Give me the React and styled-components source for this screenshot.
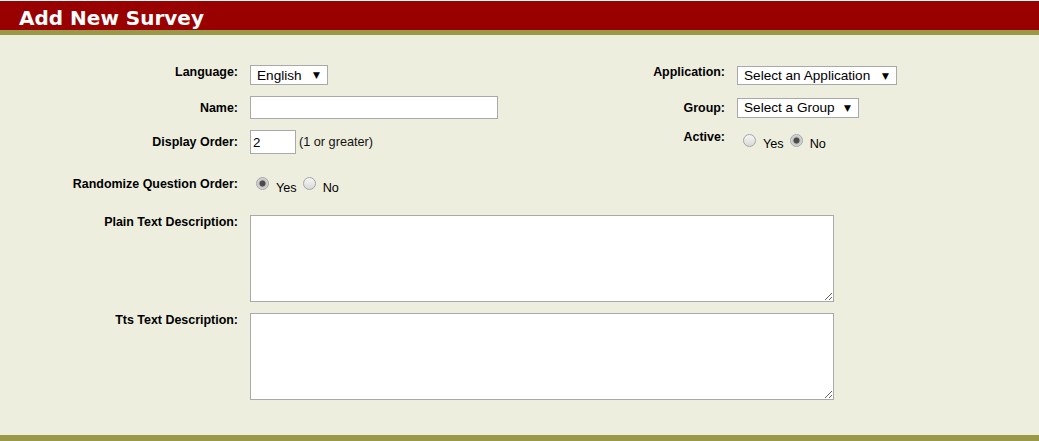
import styled, { createGlobalStyle } from "styled-components";

const olive = "#999947";
const beige = "#eeeedf";
const border = "#a9a9a9";

const GlobalStyle = createGlobalStyle`
  html, body {
    margin: 0;
    padding: 0;
    background: #fff;
  }
  body {
    font-family: "Liberation Sans", Arial, sans-serif;
  }
  * {
    box-sizing: border-box;
  }
`;

function Select({ value, width, height = 20, align = "end" }) {
  return (
    <SelectWrap $width={width} $height={height} $align={align}>
      <NativeSelect defaultValue={value}>
        <option>{value}</option>
      </NativeSelect>
      <Arrow>▼</Arrow>
    </SelectWrap>
  );
}

function RadioGroup({ name, options, checked, drop = 4, spaced, align }) {
  return (
    <Radios $spaced={spaced} $align={align}>
      {options.map((opt) => (
        <Option key={opt}>
          <Radio type="radio" name={name} defaultChecked={opt === checked} />
          <OptionText $drop={drop}>{opt}</OptionText>
        </Option>
      ))}
    </Radios>
  );
}

function App() {
  return (
    <Page>
      <GlobalStyle />
      <Header>
        <Title>Add New Survey</Title>
      </Header>

      <Form>
        <TopGrid>
          <Label $align="start">Language:</Label>
          <Select value="English" width={78} />
          <Label $align="start">Application:</Label>
          <Select value="Select an Application" width={160} height={19} />

          <Label>Name:</Label>
          <TextInput $width={248} $height={23} />
          <Label>Group:</Label>
          <Select value="Select a Group" width={122} align="center" />

          <Label>Display Order:</Label>
          <Inline>
            <TextInput $width={46} $height={24} defaultValue="2" />
            <Hint>(1 or greater)</Hint>
          </Inline>
          <Label $align="start">Active:</Label>
          <RadioGroup name="active" options={["Yes", "No"]} checked="No" drop={3} align="center" />
        </TopGrid>

        <LowerGrid>
          <Label>Randomize Question Order:</Label>
          <RadioGroup name="random" options={["Yes", "No"]} checked="Yes" spaced />

          <Label>Plain Text Description:</Label>
          <TextArea />

          <Label>Tts Text Description:</Label>
          <TextArea />
        </LowerGrid>
      </Form>

      <Footer />
    </Page>
  );
}

const Page = styled.div`
  min-height: 100vh;
  display: flex;
  flex-direction: column;
  background: ${beige};
`;

const Header = styled.header`
  height: 35px;
  border-top: 1px solid #fff;
  border-bottom: 5px solid ${olive};
  background: #990000;
  padding: 5px 19px 0;
`;

const Title = styled.h1`
  margin: 0;
  font-family: "DejaVu Sans", Verdana, sans-serif;
  font-size: 20px;
  font-weight: bold;
  line-height: 24px;
  color: #fff;
`;

const Form = styled.main`
  flex: 1;
  padding: 30px 0 35px;
`;

const TopGrid = styled.div`
  display: grid;
  grid-template-columns: 238px 350px 113px 1fr;
  column-gap: 12px;
  row-gap: 11px;
  align-items: center;
  justify-items: start;
`;

const LowerGrid = styled.div`
  display: grid;
  grid-template-columns: 238px 1fr;
  column-gap: 12px;
  row-gap: 11px;
  align-items: start;
  justify-items: start;
  margin-top: 23px;
`;

const Label = styled.label`
  justify-self: end;
  align-self: ${(p) => p.$align || "auto"};
  font-size: 12.45px;
  font-weight: bold;
  line-height: 14px;
  color: #000;
  white-space: nowrap;
`;

const SelectWrap = styled.div`
  position: relative;
  width: ${(p) => p.$width}px;
  height: ${(p) => p.$height}px;
  align-self: ${(p) => p.$align};
`;

const NativeSelect = styled.select`
  appearance: none;
  width: 100%;
  height: 100%;
  margin: 0;
  padding: 0 0 0 6px;
  border: 1px solid ${border};
  border-radius: 0;
  background: #fff;
  color: #000;
  font-family: "Liberation Sans", Arial, sans-serif;
  font-size: 13.6px;
  outline: none;
`;

const Arrow = styled.span`
  position: absolute;
  right: 8px;
  top: 50%;
  transform: translateY(-50%);
  font-family: "DejaVu Sans", sans-serif;
  font-size: 9px;
  line-height: 9px;
  color: #000;
  pointer-events: none;
`;

const TextInput = styled.input.attrs({ type: "text" })`
  width: ${(p) => p.$width}px;
  height: ${(p) => p.$height}px;
  margin: 0;
  padding: 1px 2px;
  border: 1px solid ${border};
  background: #fff;
  font-family: "Liberation Sans", Arial, sans-serif;
  font-size: 13.33px;
  color: #000;
  outline: none;
`;

const Inline = styled.div`
  display: flex;
  align-items: center;
  gap: 3px;
`;

const Hint = styled.span`
  font-size: 12.7px;
  color: #111;
`;

const Radios = styled.div`
  display: flex;
  gap: 6px;
  padding-left: 6px;
  align-self: ${(p) => p.$align || "auto"};
  margin-bottom: ${(p) => (p.$spaced ? 9 : 0)}px;
`;

const Option = styled.label`
  display: inline-flex;
  align-items: flex-start;
  gap: 7px;
`;

const Radio = styled.input`
  appearance: none;
  width: 13px;
  height: 13px;
  margin: 0;
  border-radius: 50%;
  border: 1px solid #a4a4a4;
  background: linear-gradient(#f6f6f6, #d9d9d9);

  &:checked {
    background: radial-gradient(circle, #4a4a4a 0 2.6px, #bdbdbd 3.4px, #e4e4e4 6px);
  }
`;

const OptionText = styled.span`
  margin-top: ${(p) => p.$drop}px;
  font-size: 12.7px;
  line-height: 14px;
  color: #000;
`;

const TextArea = styled.textarea`
  width: 584px;
  height: 87px;
  margin: 0;
  padding: 2px;
  border: 1px solid ${border};
  background: #fff;
  outline: none;
`;

const Footer = styled.footer`
  height: 6px;
  background: ${olive};
`;

export default App;
